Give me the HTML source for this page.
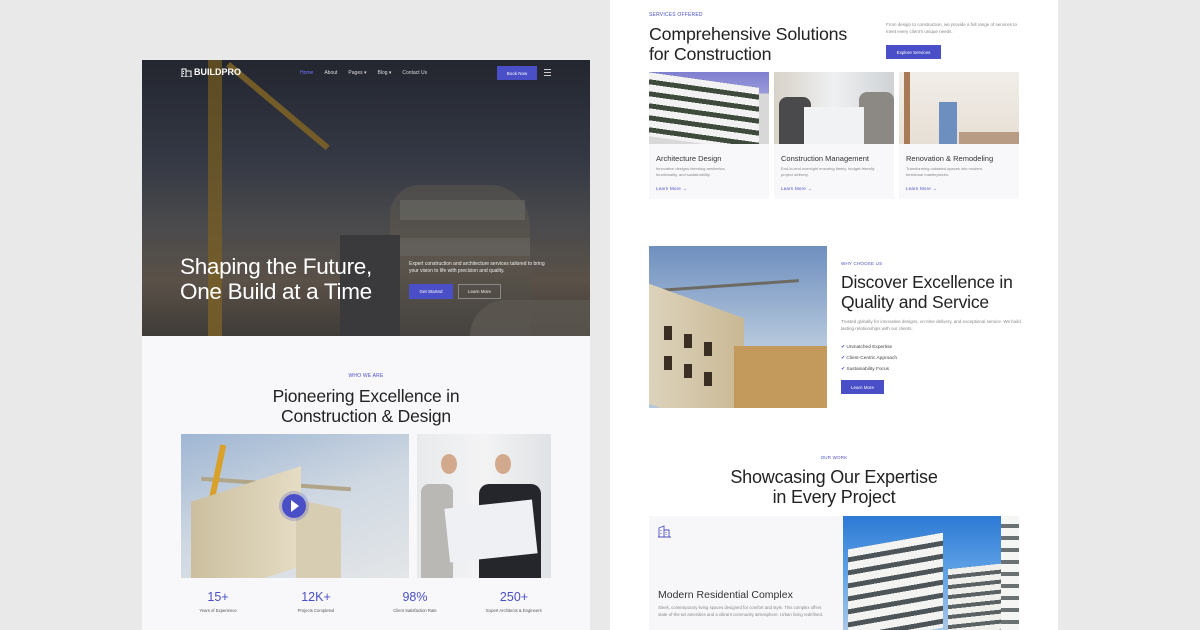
<!DOCTYPE html>
<html><head><meta charset="utf-8"><style>
*{margin:0;padding:0;box-sizing:border-box}
body{width:1200px;height:630px;background:#e9e9ea;position:relative;overflow:hidden;font-family:"Liberation Sans",sans-serif;color:#222}
.a{position:absolute}
.lbl{font-size:5px;color:#4a4fc7;letter-spacing:.2px}
.h{color:#222;font-weight:400;line-height:20px;letter-spacing:-.2px}
.p{font-size:4.5px;color:#888;line-height:7px}
.btn{background:#4a4fc7;color:#fff;font-size:4.5px;display:flex;align-items:center;justify-content:center}
.c{text-align:center}
</style></head><body>
<!-- LEFT PANEL -->
<div class="a" style="left:142px;top:60px;width:448px;height:570px;background:#f8f8fa"></div>
<div class="a" style="left:142px;top:60px;width:448px;height:276px;background:linear-gradient(180deg,#23262f 0%,#343844 35%,#4a4a4c 60%,#5a5148 80%,#3f3b37 100%)"></div>
<div class="a" style="left:208px;top:60px;width:14px;height:276px;background:linear-gradient(180deg,#6a5420,#7d6226);opacity:.8"></div>
<div class="a" style="width:130px;height:6px;background:#806426;transform:rotate(40deg);transform-origin:0 0;left:230px;top:62px;opacity:.85"></div>
<div class="a" style="left:390px;top:185px;width:140px;height:151px;background:linear-gradient(180deg,#4f4e4c,#5b554c 50%,#464340);border-radius:30px 40px 0 0;opacity:.9"></div>
<div class="a" style="left:340px;top:235px;width:60px;height:101px;background:#3a3a3c"></div>
<div class="a" style="left:400px;top:200px;width:125px;height:20px;background:#6b6a66;opacity:.6"></div>
<div class="a" style="left:400px;top:238px;width:130px;height:18px;background:#6b6a66;opacity:.5"></div>
<div class="a" style="left:470px;top:300px;width:120px;height:36px;background:#5d5751;border-radius:40px 0 0 0;opacity:.8"></div>
<!-- nav -->
<div class="a" style="left:181px;top:67px;color:#fff;font-size:9px;font-weight:700;display:flex;align-items:center;gap:2px">
<svg width="11" height="10" viewBox="0 0 11 10"><path d="M1 10V2h4v8M5 4h5v6M0 10h11M2.5 4v1M2.5 6v1" stroke="#fff" fill="none" stroke-width="1"/></svg>BUILDPRO</div>
<div class="a" style="left:300px;top:70px;font-size:5px;color:#ddd;display:flex;gap:11px"><span style="color:#6f74ff">Home</span><span>About</span><span>Pages ▾</span><span>Blog ▾</span><span>Contact Us</span></div>
<div class="a btn" style="left:497px;top:66px;width:40px;height:14px;font-size:4.5px">Book Now</div>
<div class="a" style="left:544px;top:69px;width:7px;height:7px;border-top:1px solid #ccc;border-bottom:1px solid #ccc"><div style="margin-top:2px;border-top:1px solid #ccc"></div></div>
<!-- hero text -->
<div class="a" style="left:180px;top:254px;color:#fff;font-size:22.5px;line-height:25px;letter-spacing:-.3px">Shaping the Future,<br>One Build at a Time</div>
<div class="a" style="left:409px;top:261px;color:#eee;font-size:5px;line-height:7px;width:140px">Expert construction and architecture services tailored to bring your vision to life with precision and quality.</div>
<div class="a btn" style="left:409px;top:284px;width:44px;height:15px">Get Started</div>
<div class="a" style="left:458px;top:284px;width:43px;height:15px;border:1px solid #888;color:#eee;font-size:4.5px;display:flex;align-items:center;justify-content:center">Learn More</div>
<!-- who we are -->
<div class="a lbl c" style="left:142px;top:373px;width:448px">WHO WE ARE</div>
<div class="a h c" style="left:142px;top:386px;width:448px;font-size:17.5px">Pioneering Excellence in<br>Construction &amp; Design</div>
<div class="a" style="left:181px;top:434px;width:228px;height:144px;background:linear-gradient(160deg,#9fb6d3 0%,#cfd8e2 50%,#e4e6e8 100%);overflow:hidden">
 <div class="a" style="left:20px;top:48px;width:150px;height:4px;background:#b0a588;transform:rotate(4deg)"></div>
 <div class="a" style="left:30px;top:10px;width:6px;height:90px;background:#d9a12a;transform:rotate(12deg)"></div>
 <div class="a" style="left:10px;top:50px;width:110px;height:100px;background:linear-gradient(90deg,#cbbf9f,#e5dcc4);transform:skewY(-18deg)"></div>
 <div class="a" style="left:115px;top:70px;width:45px;height:80px;background:#d6cdb2;transform:skewY(12deg)"></div>
</div>
<div class="a" style="left:282px;top:494px;width:24px;height:24px;border-radius:50%;background:#4a4fc7;box-shadow:0 0 0 3px rgba(74,79,199,.25)"></div>
<div class="a" style="left:291px;top:500px;width:0;height:0;border-left:8px solid #fff;border-top:6px solid transparent;border-bottom:6px solid transparent"></div>
<div class="a" style="left:417px;top:434px;width:134px;height:144px;background:linear-gradient(90deg,#e8eaec,#f3f3f4 50%,#dfe2e5);overflow:hidden">
 <div class="a" style="left:4px;top:50px;width:32px;height:94px;background:#b9b8b5;border-radius:8px 8px 0 0"></div>
 <div class="a" style="left:62px;top:50px;width:62px;height:94px;background:#25262b;border-radius:10px 10px 0 0"></div>
 <div class="a" style="left:24px;top:20px;width:16px;height:20px;background:#d3a98e;border-radius:50%"></div>
 <div class="a" style="left:78px;top:20px;width:16px;height:20px;background:#d3a98e;border-radius:50%"></div>
 <div class="a" style="left:30px;top:70px;width:88px;height:54px;background:#eef0f3;transform:rotate(-6deg)"></div>
</div>
<div class="a c" style="left:168px;top:590px;width:100px;color:#4a4fc7;font-size:12.5px">15+</div>
<div class="a c" style="left:266px;top:590px;width:100px;color:#4a4fc7;font-size:12.5px">12K+</div>
<div class="a c" style="left:365px;top:590px;width:100px;color:#4a4fc7;font-size:12.5px">98%</div>
<div class="a c" style="left:464px;top:590px;width:100px;color:#4a4fc7;font-size:12.5px">250+</div>
<div class="a c" style="left:168px;top:608px;width:100px;font-size:4.2px;color:#555">Years of Experience</div>
<div class="a c" style="left:266px;top:608px;width:100px;font-size:4.2px;color:#555">Projects Completed</div>
<div class="a c" style="left:365px;top:608px;width:100px;font-size:4.2px;color:#555">Client Satisfaction Rate</div>
<div class="a c" style="left:464px;top:608px;width:100px;font-size:4.2px;color:#555">Expert Architects &amp; Engineers</div>

<!-- RIGHT PANEL -->
<div class="a" style="left:610px;top:0;width:448px;height:630px;background:#fff"></div>
<div class="a lbl" style="left:649px;top:12px">SERVICES OFFERED</div>
<div class="a h" style="left:649px;top:24px;font-size:17.8px">Comprehensive Solutions<br>for Construction</div>
<div class="a p" style="left:886px;top:21px;width:140px">From design to construction, we provide a full range of services to meet every client's unique needs.</div>
<div class="a btn" style="left:886px;top:45px;width:55px;height:14px">Explore Services</div>
<div class="a" style="left:649px;top:72px;width:120px;height:72px;background:linear-gradient(180deg,#7f7fd0 0%,#9a9adb 30%,#d8d8d8 30%);overflow:hidden">
 <div class="a" style="left:0;top:8px;width:110px;height:64px;background:repeating-linear-gradient(180deg,#f2f2f2 0 7px,#3d4a3c 7px 12px);transform:skewY(8deg)"></div></div>
<div class="a" style="left:774px;top:72px;width:120px;height:72px;background:linear-gradient(90deg,#d8d2c8,#eef0f2 50%,#cfd2d4);overflow:hidden">
 <div class="a" style="left:5px;top:25px;width:32px;height:47px;background:#4a4a4d;border-radius:8px 8px 0 0"></div>
 <div class="a" style="left:85px;top:20px;width:35px;height:52px;background:#8c8985;border-radius:8px 8px 0 0"></div>
 <div class="a" style="left:30px;top:35px;width:60px;height:37px;background:#f0f2f4"></div></div>
<div class="a" style="left:899px;top:72px;width:120px;height:72px;background:linear-gradient(180deg,#f1ede8,#e6dfd5);overflow:hidden">
 <div class="a" style="left:5px;top:0;width:6px;height:72px;background:#a87a55"></div>
 <div class="a" style="left:40px;top:30px;width:18px;height:42px;background:#6c8fbf"></div>
 <div class="a" style="left:60px;top:60px;width:60px;height:12px;background:#b89d84"></div></div>
<div class="a" style="left:649px;top:144px;width:120px;height:55px;background:#f8f8fa"></div>
<div class="a" style="left:774px;top:144px;width:120px;height:55px;background:#f8f8fa"></div>
<div class="a" style="left:899px;top:144px;width:120px;height:55px;background:#f8f8fa"></div>
<div class="a" style="left:656px;top:154px;font-size:7.5px;color:#333">Architecture Design</div>
<div class="a" style="left:781px;top:154px;font-size:7.5px;color:#333">Construction Management</div>
<div class="a" style="left:906px;top:154px;font-size:7.5px;color:#333">Renovation &amp; Remodeling</div>
<div class="a p" style="left:656px;top:166px;width:90px;font-size:4px;line-height:6px">Innovative designs blending aesthetics, functionality, and sustainability.</div>
<div class="a p" style="left:781px;top:166px;width:95px;font-size:4px;line-height:6px">End-to-end oversight ensuring timely, budget-friendly project delivery.</div>
<div class="a p" style="left:906px;top:166px;width:95px;font-size:4px;line-height:6px">Transforming outdated spaces into modern, functional masterpieces.</div>
<div class="a lbl" style="left:656px;top:186px;font-size:4.5px">Learn More →</div>
<div class="a lbl" style="left:781px;top:186px;font-size:4.5px">Learn More →</div>
<div class="a lbl" style="left:906px;top:186px;font-size:4.5px">Learn More →</div>

<div class="a" style="left:649px;top:246px;width:178px;height:162px;background:linear-gradient(180deg,#6f8fbf,#b4c7dc 60%);overflow:hidden">
 <div class="a" style="left:10px;top:38px;width:140px;height:3px;background:#6c6a63;transform:rotate(-4deg)"></div>
 <div class="a" style="left:0;top:55px;width:95px;height:120px;background:linear-gradient(90deg,#ddd3bc,#c9b894);transform:skewY(20deg)"></div>
 <div class="a" style="left:85px;top:100px;width:93px;height:70px;background:#c49a5c"></div>
 <div class="a" style="left:15px;top:80px;width:8px;height:14px;background:#3a2f22;box-shadow:20px 8px #3a2f22,40px 16px #3a2f22,0 30px #3a2f22,20px 38px #3a2f22,40px 46px #3a2f22"></div>
</div>
<div class="a lbl" style="left:841px;top:261px;font-size:4.5px">WHY CHOOSE US</div>
<div class="a h" style="left:841px;top:272px;font-size:17.5px">Discover Excellence in<br>Quality and Service</div>
<div class="a p" style="left:841px;top:318px;width:180px;font-size:4.5px">Trusted globally for innovative designs, on-time delivery, and exceptional service. We build lasting relationships with our clients.</div>
<div class="a" style="left:841px;top:342px;font-size:4.8px;color:#444;line-height:11px"><span style="color:#4a4fc7">✔</span> Unmatched Expertise<br><span style="color:#4a4fc7">✔</span> Client-Centric Approach<br><span style="color:#4a4fc7">✔</span> Sustainability Focus</div>
<div class="a btn" style="left:841px;top:380px;width:43px;height:14px">Learn More</div>

<div class="a lbl c" style="left:610px;top:455px;width:448px;font-size:4.5px">OUR WORK</div>
<div class="a h c" style="left:610px;top:467px;width:448px;font-size:18px">Showcasing Our Expertise<br>in Every Project</div>
<div class="a" style="left:649px;top:516px;width:194px;height:114px;background:#f7f7f9"></div>
<svg class="a" style="left:658px;top:525px" width="13" height="13" viewBox="0 0 13 13"><path d="M1 12V3l5-2v11M6 5h5v7M0 12h13M3 5v1M3 8v1M8 7v1M8 9v1" stroke="#4a4fc7" fill="none" stroke-width=".9"/></svg>
<div class="a" style="left:658px;top:589px;font-size:10.5px;color:#333">Modern Residential Complex</div>
<div class="a p" style="left:658px;top:604px;width:175px;font-size:4.3px">Sleek, contemporary living spaces designed for comfort and style. This complex offers state-of-the-art amenities and a vibrant community atmosphere. Urban living redefined.</div>
<div class="a" style="left:843px;top:516px;width:176px;height:114px;background:linear-gradient(180deg,#2d79d4,#5fa2e6 50%,#aac8e6);overflow:hidden">
 <div class="a" style="left:5px;top:25px;width:95px;height:95px;background:repeating-linear-gradient(180deg,#f3f3f1 0 8px,#4d5558 8px 13px);transform:skewY(-10deg)"></div>
 <div class="a" style="left:105px;top:50px;width:60px;height:70px;background:repeating-linear-gradient(180deg,#efefec 0 6px,#5b6264 6px 10px);transform:skewY(-6deg)"></div>
 <div class="a" style="left:158px;top:0;width:18px;height:114px;background:repeating-linear-gradient(180deg,#f5f5f3 0 8px,#6b7072 8px 12px)"></div>
</div>
</body></html>
